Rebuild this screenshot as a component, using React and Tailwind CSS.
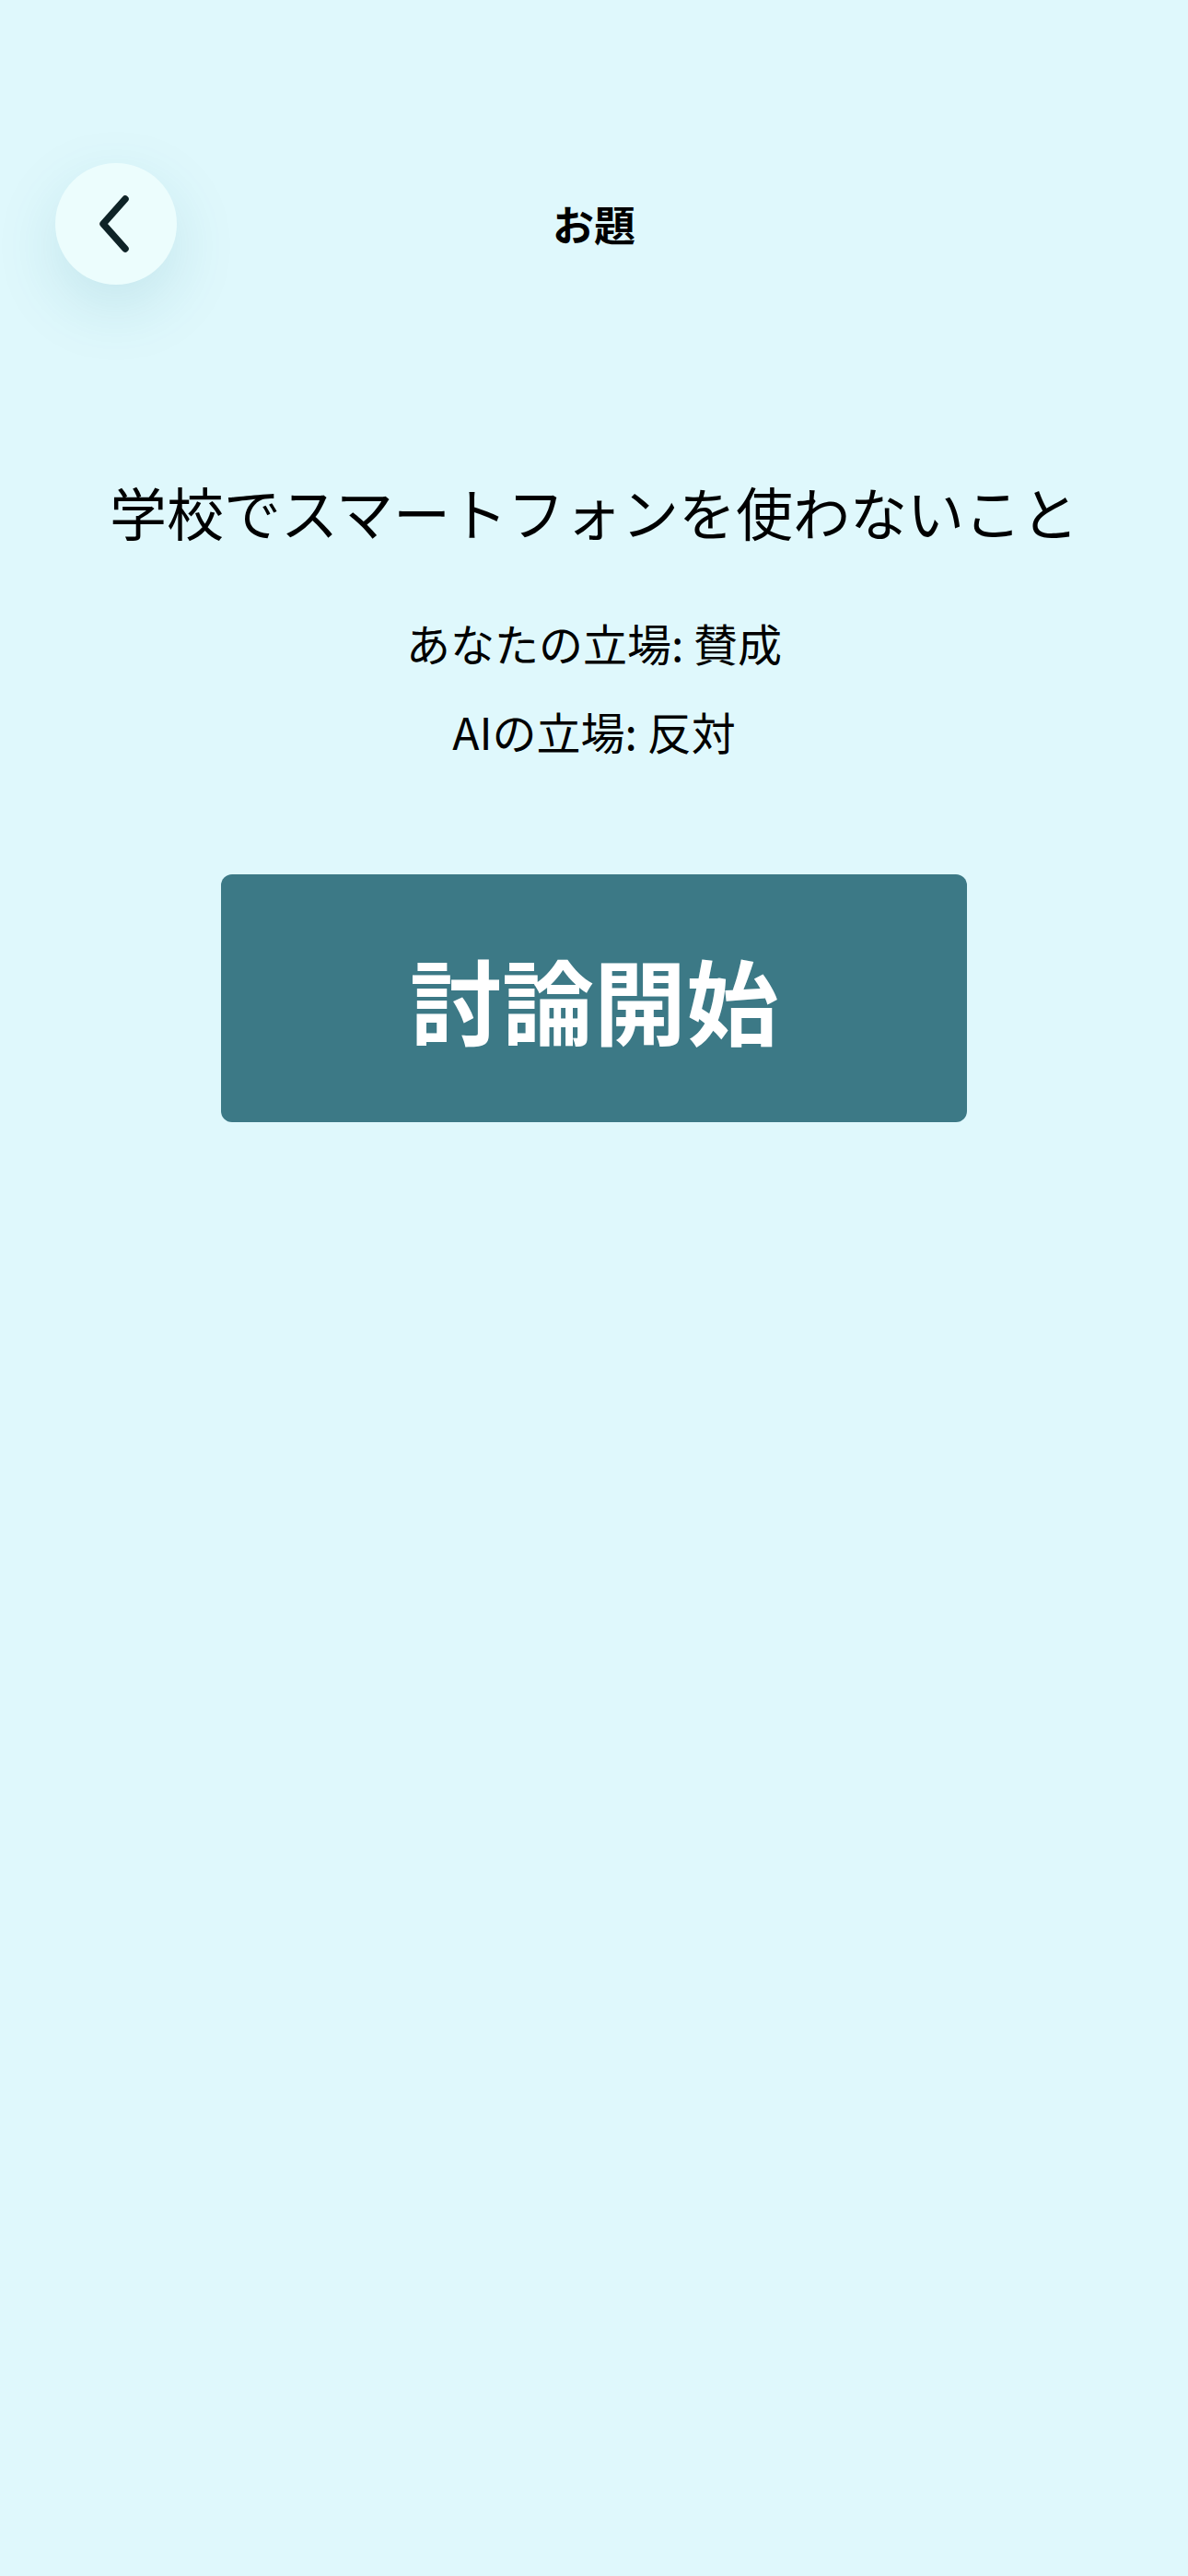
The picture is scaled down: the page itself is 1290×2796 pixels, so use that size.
import React from "react";

function BackIcon() {
  return (
    <svg width="40" height="64" viewBox="0 0 40 64" fill="none">
      <path d="M32 5 L8 32 L32 59" stroke="#0e2327" strokeWidth="7.5" strokeLinecap="round" strokeLinejoin="round" />
    </svg>
  );
}

export default function App() {
  return (
    <div
      className="min-h-[2796px] w-full bg-[#dff8fc] text-black"
      style={{ fontFamily: '"Noto Sans CJK JP", "Noto Sans", sans-serif' }}
    >
      <header className="grid grid-cols-[132px_1fr_132px] items-center px-[60px] pt-[177px]">
        <button className="flex h-[132px] w-[132px] items-center justify-center rounded-full bg-[#ecfdfd] shadow-[0_24px_70px_rgba(0,110,130,0.13)]">
          <span className="ml-[-4px] flex">
            <BackIcon />
          </span>
        </button>
        <h1 className="text-center text-[45px] font-bold leading-[60px]">お題</h1>
        <div />
      </header>

      <main className="flex flex-col items-center">
        <p className="mt-[200px] text-[62px] leading-[92px]">学校でスマートフォンを使わないこと</p>
        <p className="mt-[62px] text-[48px] leading-[68px]">あなたの立場: 賛成</p>
        <p className="mt-[28px] text-[48px] leading-[68px]">AIの立場: 反対</p>
        <button className="mt-[122px] flex h-[269px] w-[810px] items-center justify-center rounded-[12px] bg-[#3c7986] text-[100px] font-bold leading-none text-white">
          討論開始
        </button>
      </main>
    </div>
  );
}
